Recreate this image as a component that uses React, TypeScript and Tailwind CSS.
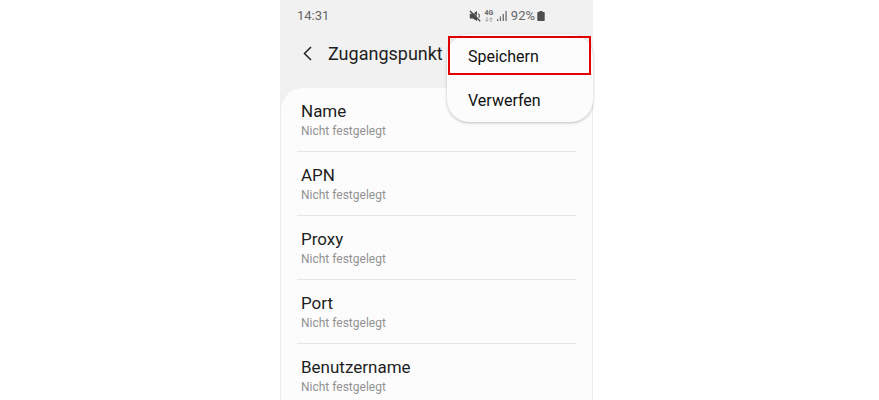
import React from 'react';

interface Setting {
    label: string;
    value: string;
}

const settings: Setting[] = [
    { label: 'Name', value: 'Nicht festgelegt' },
    { label: 'APN', value: 'Nicht festgelegt' },
    { label: 'Proxy', value: 'Nicht festgelegt' },
    { label: 'Port', value: 'Nicht festgelegt' },
    { label: 'Benutzername', value: 'Nicht festgelegt' },
];

const MutedIcon = () => (
    <svg width="12" height="12" viewBox="0 0 12 12" aria-hidden="true">
        <path d="M0.8 3.8h3L8 1v10L3.8 8.4h-3z" fill="#4a4a4a" />
        <path d="M9.4 3.6c1 1.2 1 3.4 0 4.6" fill="none" stroke="#5a5a5a" strokeWidth="1.1" />
        <path d="M2.2 0.6l9.4 9.4" stroke="#f1f1f1" strokeWidth="0.7" />
        <path d="M1 1l10.2 10.2" stroke="#4a4a4a" strokeWidth="1.4" />
    </svg>
);

const DataArrowsIcon = () => (
    <svg width="8" height="5" viewBox="0 0 8 5" fill="none" stroke="#a3a3a3" strokeWidth="1" aria-hidden="true">
        <path d="M2 0v4M0.5 2.7L2 4.3l1.5-1.6" />
        <path d="M6 5V1M4.5 2.3L6 0.7l1.5 1.6" />
    </svg>
);

const SignalIcon = () => (
    <svg width="10" height="10" viewBox="0 0 10 10" fill="#6b6b6b" aria-hidden="true">
        <rect x="0" y="8" width="1.2" height="2" />
        <rect x="2.8" y="5.5" width="1.2" height="4.5" />
        <rect x="5.6" y="3" width="1.3" height="7" />
        <rect x="8.4" y="0" width="1.3" height="10" />
    </svg>
);

const BatteryIcon = () => (
    <svg width="8" height="10" viewBox="0 0 8 10" fill="#4f4f4f" aria-hidden="true">
        <path d="M2.4 0h3.2v1H7a.7.7 0 0 1 .7.7v7.6a.7.7 0 0 1-.7.7H1a.7.7 0 0 1-.7-.7V1.7A.7.7 0 0 1 1 1h1.4z" />
    </svg>
);

const StatusBar = () => (
    <div className="flex items-center justify-between h-8 pl-[17px] pr-12 text-[13px] leading-4 text-[#666]">
        <span>14:31</span>
        <div className="flex items-center">
            <MutedIcon />
            <div className="flex flex-col items-center ml-1 w-2">
                <span className="text-[7px] leading-[7px] font-bold">4G</span>
                <DataArrowsIcon />
            </div>
            <span className="ml-1">
                <SignalIcon />
            </span>
            <span className="ml-1 mr-0.5">92%</span>
            <BatteryIcon />
        </div>
    </div>
);

const ActionMenu = () => (
    <div className="absolute top-[34px] right-0 w-[146px] rounded-[22px] bg-[#fcfcfc] pt-0.5 shadow-[0_1px_3px_rgba(0,0,0,0.25)]">
        <button className="block ml-px w-[143px] h-[39px] border-2 border-[#e00000] pt-0.5 pl-[18px] text-left text-base text-[#111]">
            Speichern
        </button>
        <button className="block w-full h-[47px] pl-[21px] pt-1 text-left text-base text-[#111]">Verwerfen</button>
    </div>
);

const App = () => {
    return (
        <div className="flex justify-center h-screen overflow-hidden bg-white pr-1.5 font-['Roboto',sans-serif]">
            <main className="relative w-full max-w-[313px] bg-[#f1f1f1]">
                <StatusBar />

                <header className="flex items-center h-14 pl-4 pb-3">
                    <button aria-label="Zurück" className="flex justify-center w-6">
                        <svg width="10" height="16" viewBox="0 0 10 16" fill="none" stroke="#222" strokeWidth="1.5" aria-hidden="true">
                            <path d="M8 1L1.5 7.5 8 14" />
                        </svg>
                    </button>
                    <h1 className="ml-2 text-lg text-[#1e1e1e]">Zugangspunkt</h1>
                </header>

                {/* Settings card, continues below the fold */}
                <ul className="rounded-t-[22px] border-x border-[#ececec] bg-[#fcfcfc] px-4">
                    {settings.map((setting) => (
                        <li key={setting.label} className="h-16 border-b border-[#e6e6e6]">
                            <button className="block w-full pt-[11px] pl-1 text-left">
                                <span className="block text-[17px] leading-6 text-[#1e1e1e]">{setting.label}</span>
                                <span className="block text-xs leading-4 text-[#929292]">{setting.value}</span>
                            </button>
                        </li>
                    ))}
                </ul>

                <ActionMenu />
            </main>
        </div>
    );
};

export default App;
